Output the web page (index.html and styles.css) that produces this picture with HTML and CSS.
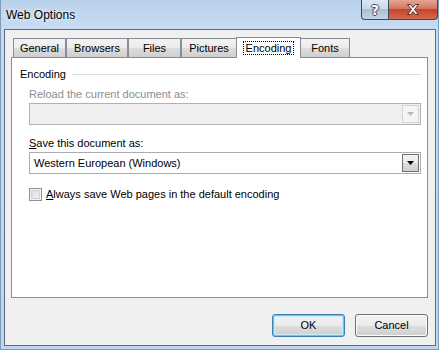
FILE: index.html
```html
<!DOCTYPE html>
<html lang="en">
<head>
  <meta charset="UTF-8">
  <title>Web Options</title>
  <link rel="stylesheet" href="styles.css">
</head>
<body>
  <div class="window">
    <div class="titlebar">
      <span class="title">Web Options</span>
      <div class="caption-buttons">
        <div class="cap help">?</div>
        <div class="cap close">
          <svg width="14" height="11" viewBox="0 0 14 11">
            <path d="M1.5 0.5h3l2.5 3 2.5-3h3l-4 5 4 5h-3l-2.5-3-2.5 3h-3l4-5z" fill="#fff" stroke="#5a2a2a" stroke-width="1"/>
          </svg>
        </div>
      </div>
    </div>

    <div class="client">
      <div class="tabs">
        <div class="tab" style="width:53px">General</div>
        <div class="tab" style="width:62px">Browsers</div>
        <div class="tab" style="width:53px">Files</div>
        <div class="tab" style="width:56px">Pictures</div>
        <div class="tab selected" style="width:65px"><span class="focus">Encoding</span></div>
        <div class="tab" style="width:50px">Fonts</div>
      </div>

      <div class="panel">
        <div class="group-head">
          <span>Encoding</span>
          <div class="rule"></div>
        </div>

        <div class="group-body">
          <div class="label disabled">Reload the current document as:</div>
          <div class="combo disabled">
            <span class="value"></span>
            <span class="drop"><svg width="7" height="4" viewBox="0 0 7 4"><path d="M0 0h7l-3.5 4z" fill="#b9b9b9"/></svg></span>
          </div>

          <div class="label save"><u>S</u>ave this document as:</div>
          <div class="combo">
            <span class="value">Western European (Windows)</span>
            <span class="drop"><svg width="7" height="4" viewBox="0 0 7 4"><path d="M0 0h7l-3.5 4z" fill="#000"/></svg></span>
          </div>

          <label class="check">
            <span class="box"></span>
            <span><u>A</u>lways save Web pages in the default encoding</span>
          </label>
        </div>
      </div>

      <div class="buttons">
        <div class="btn default">OK</div>
        <div class="btn">Cancel</div>
      </div>
    </div>
  </div>
</body>
</html>
```

FILE: styles.css
```css
body {
  margin: 0;
  background: #c4dbf2;
  font-family: "Segoe UI", "Liberation Sans", Arial, sans-serif;
  font-size: 11px;
  color: #000;
}
.window {
  width: 439px;
  height: 350px;
  box-sizing: border-box;
  background: linear-gradient(180deg, #b9d1ea 0px, #c7dcf2 30px, #bfd6ee 100%);
  border-left: 1px solid #7d9cbd;
  border-right: 1px solid #7d9cbd;
  border-bottom: 1px solid #7d9cbd;
}
.titlebar {
  height: 29px;
  display: flex;
  justify-content: space-between;
}
.title {
  padding: 8px 0 0 5px;
  font-size: 12px;
  line-height: 15px;
  text-shadow: 0 0 6px #e8f2fc, 0 0 3px #ffffff;
}
.caption-buttons {
  display: flex;
  height: 20px;
}
.cap {
  height: 19px;
  border: 1px solid #3b4a5e;
  border-top: none;
  display: flex;
  align-items: center;
  justify-content: center;
}
.help {
  width: 26px;
  border-radius: 0 0 0 4px;
  border-right: none;
  background: linear-gradient(180deg, #dbe6f2 0%, #c9d8e8 45%, #aabed3 50%, #c3d5e8 100%);
  color: #fff;
  font-weight: bold;
  font-size: 14px;
  font-family: "DejaVu Sans", sans-serif;
  text-shadow: 1px 0 0 #3b4a5e, -1px 0 0 #3b4a5e, 0 1px 0 #3b4a5e, 0 -1px 0 #3b4a5e;
}
.close {
  width: 48px;
  border-radius: 0 0 4px 0;
  background: linear-gradient(180deg, #e5a696 0%, #d4765f 45%, #c4452b 50%, #d56a4f 100%);
}
.client {
  width: 432px;
  height: 317px;
  margin-left: 3px;
  box-sizing: border-box;
  border: 1px solid #5d6b7b;
  background: #f0f0f0;
  padding: 7px 7px 0 6px;
}
.tabs {
  display: flex;
  align-items: flex-end;
  height: 20px;
  padding-left: 2px;
}
.tab {
  box-sizing: border-box;
  height: 19px;
  border: 1px solid #898c95;
  border-bottom: none;
  background: linear-gradient(180deg, #f3f3f3 0%, #ebebeb 50%, #dddddd 51%, #cfcfcf 100%);
  text-align: center;
  line-height: 18px;
}
.tab.selected {
  height: 21px;
  margin: 0 -1px -1px -1px;
  background: #fff;
  position: relative;
  z-index: 1;
  line-height: 20px;
}
.focus {
  outline: 1px dotted #000;
  padding: 0 2px;
}
.panel {
  box-sizing: border-box;
  width: 417px;
  height: 241px;
  background: #fff;
  border: 1px solid #898c95;
  padding: 9px 6px 0 8px;
}
.group-head {
  display: flex;
  align-items: center;
  line-height: 15px;
}
.rule {
  flex: 1;
  height: 1px;
  background: #d5dfe5;
  margin-left: 6px;
}
.group-body {
  padding-left: 9px;
}
.label {
  line-height: 15px;
  margin-top: 5px;
  margin-bottom: 1px;
}
.label.save {
  margin-top: 11px;
}
.disabled {
  color: #8d8d8d;
}
.combo {
  box-sizing: border-box;
  height: 22px;
  border: 1px solid #abadb3;
  display: flex;
  align-items: center;
  padding: 1px;
}
.combo.disabled {
  background: #f0f0f0;
  border-color: #adb2b5;
}
.combo .value {
  flex: 1;
  padding-left: 3px;
}
.drop {
  box-sizing: border-box;
  width: 17px;
  height: 18px;
  border: 1px solid #707070;
  background: linear-gradient(180deg, #f2f2f2 0%, #ebebeb 50%, #dddddd 51%, #cfcfcf 100%);
  display: flex;
  align-items: center;
  justify-content: center;
}
.combo.disabled .drop {
  border-color: #d5d5d5;
  background: #f4f4f4;
}
.check {
  display: flex;
  align-items: center;
  margin-top: 13px;
  line-height: 15px;
}
.box {
  box-sizing: border-box;
  width: 13px;
  height: 13px;
  border: 1px solid #8e8f8f;
  background: linear-gradient(135deg, #dcdcdc 0%, #f4f4f4 100%);
  box-shadow: inset 0 0 0 1px #f4f4f4, inset 0 0 0 2px #d2d2d2;
  margin-right: 4px;
}
.buttons {
  display: flex;
  justify-content: flex-end;
  gap: 10px;
  margin-top: 16px;
  width: 417px;
}
.btn {
  box-sizing: border-box;
  width: 73px;
  height: 23px;
  border: 1px solid #707070;
  border-radius: 3px;
  background: linear-gradient(180deg, #f2f2f2 0%, #ebebeb 50%, #dddddd 51%, #cfcfcf 100%);
  box-shadow: inset 0 0 0 1px #fcfcfc;
  text-align: center;
  line-height: 20px;
}
.btn.default {
  border-color: #3c7fb1;
  box-shadow: inset 0 0 0 1px #48d5fb, inset 0 0 0 2px #c6ecfa;
}
```
